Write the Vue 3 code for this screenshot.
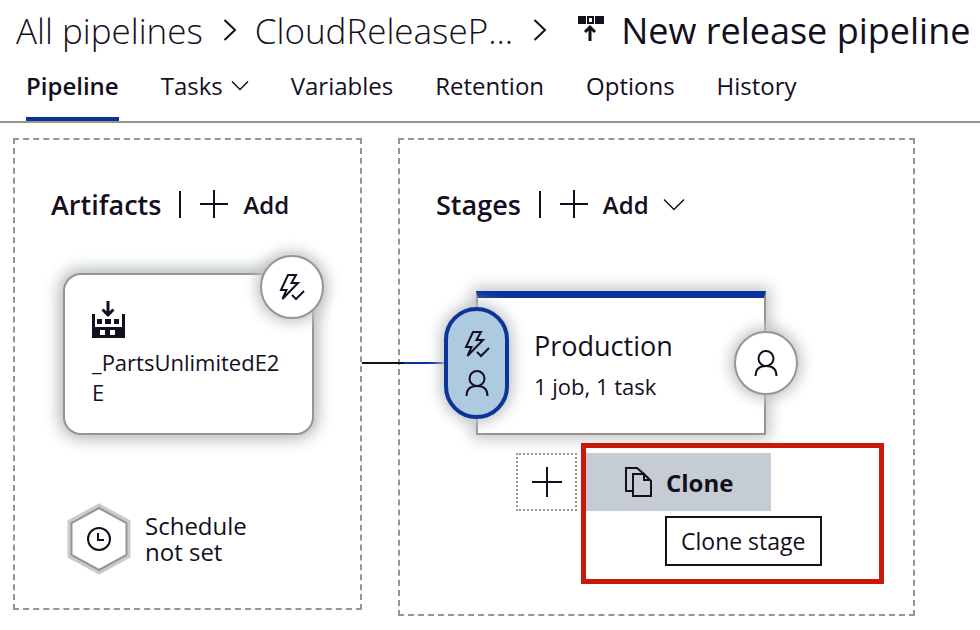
<script setup>
const tabs = [
  { label: 'Pipeline', active: true },
  { label: 'Tasks', menu: true },
  { label: 'Variables' },
  { label: 'Retention' },
  { label: 'Options' },
  { label: 'History' },
]
</script>

<template>
  <div class="page">
    <header class="top">
      <nav class="crumbs" aria-label="Breadcrumb">
        <a href="#" class="crumb">All pipelines</a>
        <svg class="sep" width="14" height="22" viewBox="0 0 14 22"><path d="M1.500 1L12 11L1.500 21" /></svg>
        <a href="#" class="crumb">CloudReleaseP...</a>
        <svg class="sep" width="14" height="22" viewBox="0 0 14 22"><path d="M1.500 1L12 11L1.500 21" /></svg>
        <svg class="release" width="28" height="28" viewBox="0 0 28 28">
          <path class="solid" d="M1 1H9V9H1ZM10 1H17V9H10ZM18 1H27V9H18Z" />
          <path class="hole" d="M12 3H15V7H12Z" />
          <path class="stem" d="M13 26V12M8 17L13 12L18 17" />
        </svg>
        <h1 class="title">New release pipeline</h1>
      </nav>
      <nav class="tabs" aria-label="Pipeline sections">
        <a v-for="t in tabs" :key="t.label" href="#" class="tab" :class="{ active: t.active }">
          {{ t.label }}
          <svg v-if="t.menu" class="chev" width="18" height="11" viewBox="0 0 18 11"><path d="M1 1.500L9 9.500L17 1.500" /></svg>
        </a>
      </nav>
    </header>

    <main class="canvas">
      <section class="panel artifacts">
        <div class="head">
          <h2>Artifacts</h2>
          <span class="bar"></span>
          <button class="add">
            <svg class="plus" width="30" height="30" viewBox="0 0 30 30"><path d="M15 1V29M1 15H29" /></svg>
            Add
          </button>
        </div>
        <div class="artifact">
          <svg class="build" width="33" height="37" viewBox="0 0 33 37">
            <path class="solid" d="M0 13H3V26H30V13H33V37H0ZM5 18H10V23H5ZM13 18H19V23H13ZM22 18H27V23H22Z" />
            <path class="solid" d="M5 18H10V23H5ZM13 18H19V23H13ZM22 18H27V23H22Z" />
            <path class="hole" d="M8 29H13V34H8ZM18 29H23V34H18Z" />
            <path class="arrow" d="M16 0V13M10.500 8.500L16 14L21.500 8.500" />
          </svg>
          <div class="source">_PartsUnlimitedE2E</div>
          <button class="round trigger" aria-label="Continuous deployment trigger">
            <svg class="glyph" width="26" height="28" viewBox="0 0 26 28">
              <path d="M9 2H17L12.500 10H19L3.500 26L7.500 17H2Z" /><path d="M13 22L17 26L25 18" />
            </svg>
          </button>
        </div>
        <div class="schedule">
          <svg class="hex" width="64" height="72" viewBox="0 0 64 72">
            <path class="halo" d="M32 3L61 19V53L32 69L3 53V19Z" />
            <path class="edge" d="M32 5L59.500 20V52L32 67L4.500 52V20Z" />
            <circle class="dial" cx="32" cy="36" r="11" />
            <path class="dial" d="M31 30V37H37" />
          </svg>
          <span>Schedule<br>not set</span>
        </div>
      </section>

      <section class="panel stages">
        <span class="wire"></span>
        <div class="head">
          <h2>Stages</h2>
          <span class="bar"></span>
          <button class="add">
            <svg class="plus" width="30" height="30" viewBox="0 0 30 30"><path d="M15 1V29M1 15H29" /></svg>
            Add
            <svg class="chev" width="22" height="13" viewBox="0 0 22 13"><path d="M1 1.500L11 11.500L21 1.500" /></svg>
          </button>
        </div>
        <div class="stage">
          <div class="name">Production</div>
          <div class="jobs">1 job, 1 task</div>
          <button class="pill" aria-label="Pre-deployment conditions">
            <svg class="glyph" width="26" height="28" viewBox="0 0 26 28">
              <path d="M9 2H17L12.500 10H19L3.500 26L7.500 17H2Z" /><path d="M13 22L17 26L25 18" />
            </svg>
            <svg class="glyph" width="24" height="26" viewBox="0 0 24 26">
              <circle cx="12" cy="8.500" r="7.500" /><path d="M1.500 26C1.500 19 6 16 12 16S22.500 19 22.500 26" />
            </svg>
          </button>
          <button class="round approve" aria-label="Post-deployment conditions">
            <svg class="glyph" width="24" height="26" viewBox="0 0 24 26">
              <circle cx="12" cy="8.500" r="7.500" /><path d="M1.500 26C1.500 19 6 16 12 16S22.500 19 22.500 26" />
            </svg>
          </button>
        </div>
        <div class="actions">
          <button class="add-box" aria-label="Add stage">
            <svg class="plus" width="30" height="30" viewBox="0 0 30 30"><path d="M15 0V30M0 15H30" /></svg>
          </button>
          <div class="callout">
            <button class="clone">
              <svg class="copy" width="27" height="30" viewBox="0 0 27 30">
                <path d="M8 24H1V1H12L19 7" />
                <path class="front" d="M8 7H19L26 14V29H8Z" />
                <path d="M19 7V13H25" />
              </svg>
              Clone
            </button>
            <div class="tip" role="tooltip">Clone stage</div>
          </div>
        </div>
      </section>
    </main>
  </div>
</template>

<style>
body {
  margin: 0;
  background: #fff;
}
</style>

<style scoped>
.page {
  font-family: "Open Sans", "Noto Sans", sans-serif;
  font-size: 24px;
  color: #140f1e;
}
.page * {
  box-sizing: border-box;
}
a {
  color: inherit;
  text-decoration: none;
}
button {
  font: inherit;
  color: inherit;
  background: none;
  border: 0;
  padding: 0;
}
svg {
  flex: none;
  fill: none;
  stroke: #140f1e;
  stroke-width: 2;
}
.solid {
  fill: #140f1e;
  stroke: none;
}
.hole {
  fill: #fff;
  stroke: none;
}
.top {
  border-bottom: 2px solid #9d9389;
}
.crumbs {
  display: flex;
  align-items: center;
  height: 62px;
  padding: 0 0 2px 16px;
  white-space: nowrap;
  font-size: 35px;
}
.crumb {
  font-weight: 300;
}
.sep {
  margin: 0 18px 0 20px;
}
.release {
  margin: 0 16px 2px 12px;
}
.stem {
  stroke-width: 3;
}
.title {
  margin: 0;
  font-size: 36px;
  font-weight: 400;
}
.tabs {
  display: flex;
  gap: 42px;
  height: 59px;
  padding-left: 26px;
}
.tab {
  display: flex;
  align-items: center;
  gap: 8px;
  padding-bottom: 8px;
  border-bottom: 4px solid transparent;
}
.tab.active {
  font-weight: 600;
  border-color: #0b3399;
}
.chev {
  stroke-width: 1.500;
}
.canvas {
  display: grid;
  grid-template-columns: 349fr 517fr;
  align-items: start;
  gap: 36px;
  padding: 15px 65px 14px 13px;
}
.panel {
  position: relative;
  border: 2px dashed #9d9389;
  padding: 44px 36px 0;
}
.head {
  display: flex;
  align-items: center;
  height: 40px;
}
h2 {
  margin: 0;
  font-size: 27px;
  font-weight: 600;
}
.bar {
  width: 2px;
  height: 27px;
  margin: 0 18px;
  background: #140f1e;
}
.add {
  display: flex;
  align-items: center;
  gap: 14px;
  font-weight: 600;
}
.artifact {
  position: relative;
  height: 162px;
  margin: 49px 10px 0 12px;
  padding: 26px 27px 0;
  border: 2px solid #9d9389;
  border-radius: 18px;
  background: #fff;
  box-shadow: 0 0 16px 4px #b0b7bc;
}
.build {
  display: block;
}
.arrow {
  stroke-width: 3;
}
.source {
  padding-top: 9px;
  font-size: 22px;
  line-height: 30px;
  overflow-wrap: anywhere;
}
.round {
  position: absolute;
  display: grid;
  place-items: center;
  width: 64px;
  height: 64px;
  border: 2px solid #9d9389;
  border-radius: 50%;
  background: #fff;
  box-shadow: 0 0 14px 4px #c0c5c9;
}
.trigger {
  top: -20px;
  right: -12px;
}
.schedule {
  display: flex;
  align-items: center;
  gap: 14px;
  margin: 68px 0 33px 16px;
  line-height: 26px;
}
.halo {
  stroke: #c5ccd4;
  stroke-width: 5;
}
.edge {
  fill: #fff;
  stroke: #9d9389;
}
.wire {
  position: absolute;
  top: 222px;
  left: -38px;
  width: 84px;
  height: 2px;
  background: linear-gradient(90deg, #140f1e 50%, #0b3399 50%);
}
.stage {
  position: relative;
  height: 144px;
  margin: 67px 111px 0 40px;
  padding: 29px 0 0 56px;
  border: 2px solid #9d9389;
  border-top: 7px solid #0b3399;
  background: #fff;
  box-shadow: 0 0 14px 4px #c0c5c9;
}
.name {
  font-size: 27px;
  line-height: 38px;
}
.jobs {
  font-size: 22px;
  line-height: 42px;
}
.pill {
  position: absolute;
  top: 9px;
  left: -34px;
  display: flex;
  flex-direction: column;
  align-items: center;
  justify-content: center;
  gap: 12px;
  width: 65px;
  height: 112px;
  border: 4px solid #0b3399;
  border-radius: 33px;
  background: #aecae1;
  box-shadow: 0 0 14px 4px #c0c5c9;
}
.approve {
  top: 33px;
  right: -34px;
}
.actions {
  position: relative;
  display: flex;
  align-items: flex-start;
  gap: 4px;
  margin: 8px -7px 30px 80px;
}
.add-box {
  display: grid;
  place-items: center;
  width: 61px;
  height: 58px;
  margin-top: 10px;
  border: 2px dotted #9d9389;
}
.callout {
  flex: 1;
  padding: 5px 0 13px;
  border: 5px solid #c8190b;
}
.clone {
  display: flex;
  align-items: center;
  gap: 14px;
  height: 58px;
  padding: 0 38px 0 39px;
  background: #c5ccd4;
  font-weight: 700;
}
.front {
  fill: #c5ccd4;
}
.tip {
  width: fit-content;
  height: 50px;
  margin: 5px 0 0 79px;
  padding: 0 15px 0 14px;
  border: 2px solid #140f1e;
  background: #fff;
  font-size: 23px;
  line-height: 46px;
}
</style>
